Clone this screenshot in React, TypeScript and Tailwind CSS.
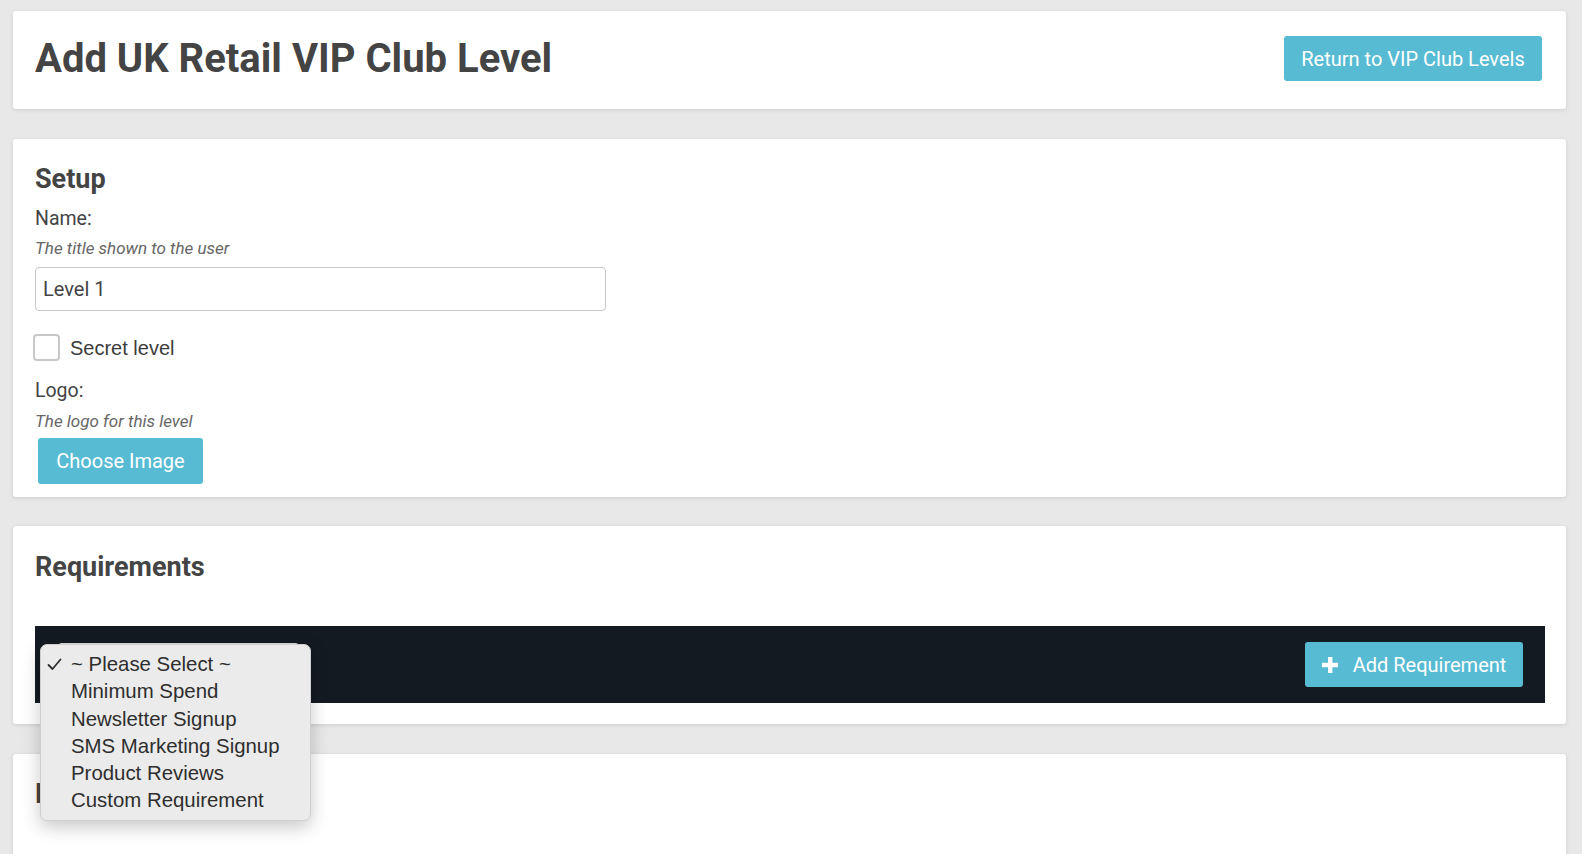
import React from "react";

const items = [
  "~ Please Select ~",
  "Minimum Spend",
  "Newsletter Signup",
  "SMS Marketing Signup",
  "Product Reviews",
  "Custom Requirement",
];

export default function App() {
  return (
    <div className="relative h-[854px] w-[1582px] overflow-hidden bg-[#e8e8e8] pl-[13px] pr-[16px] pt-[11px] font-['Roboto',sans-serif] text-[#444444]">
      {/* Header card */}
      <div className="flex items-center justify-between rounded-[3px] bg-white pl-[22px] pr-[24px] pt-[25px] pb-[28px] shadow-[0_1px_4px_rgba(0,0,0,0.12)]">
        <h1 className="text-[40px] font-bold leading-[45px] text-[#444444]">Add UK Retail VIP Club Level</h1>
        <button className="flex h-[45px] w-[258px] items-center justify-center rounded-[3px] bg-[#58bbd4] text-[20px] text-white">
          Return to VIP Club Levels
        </button>
      </div>

      {/* Setup card */}
      <div className="mt-[30px] rounded-[3px] bg-white pl-[22px] pr-[22px] pt-[26px] pb-[13px] shadow-[0_1px_4px_rgba(0,0,0,0.12)]">
        <h2 className="text-[27px] font-bold leading-[28px]">Setup</h2>
        <div className="mt-[14px] text-[19.5px] leading-[24px]">Name:</div>
        <div className="mt-[6px] text-[17px] italic leading-[22px] text-[#666666]">The title shown to the user</div>
        <div className="mt-[8px] flex h-[44px] w-[571px] items-center rounded-[4px] border border-[#c9c9c9] px-[7px] text-[20px] text-[#444444]">
          Level 1
        </div>
        <div className="mt-[23px] ml-[-2px] flex h-[27px] items-center">
          <div className="h-[27px] w-[27px] rounded-[4px] border-2 border-[#c8c8c8] bg-white" />
          <span className="ml-[10px] font-['Liberation_Sans',Arial,sans-serif] text-[20px] text-[#3c3c3c]">Secret level</span>
        </div>
        <div className="mt-[18px] text-[19.5px] leading-[24px]">Logo:</div>
        <div className="mt-[7px] text-[17px] italic leading-[22px] text-[#666666]">The logo for this level</div>
        <button className="ml-[3px] mt-[6px] flex h-[46px] w-[165px] items-center justify-center rounded-[3px] bg-[#58bbd4] text-[20px] text-white">
          Choose Image
        </button>
      </div>

      {/* Requirements card */}
      <div className="mt-[29px] rounded-[3px] bg-white pl-[22px] pr-[21px] pt-[27px] pb-[21px] shadow-[0_1px_4px_rgba(0,0,0,0.12)]">
        <h2 className="text-[27px] font-bold leading-[28px]">Requirements</h2>
        <div className="mt-[45px] flex h-[77px] items-center justify-between bg-[#131a21] pl-[22px] pr-[22px]">
          <div className="h-[44px] w-[243px] self-start mt-[17px] rounded-[5px] bg-[#dcdcdc]" />
          <button className="flex h-[45px] w-[218px] items-center justify-center gap-[15px] rounded-[3px] bg-[#58bbd4] text-[20px] text-white">
            <svg width="16" height="16" viewBox="0 0 16 16">
              <rect x="6" y="0" width="4.4" height="16" fill="white" />
              <rect x="0" y="5.8" width="16" height="4.4" fill="white" />
            </svg>
            <span>Add Requirement</span>
          </button>
        </div>
      </div>

      {/* Next card (partially visible) */}
      <div className="mt-[30px] h-[200px] rounded-[3px] bg-white pl-[22px] pt-[24px] shadow-[0_1px_4px_rgba(0,0,0,0.12)]">
        <h2 className="text-[28px] font-bold leading-[32px]">Rewards</h2>
      </div>

      {/* Native select dropdown menu */}
      <div className="absolute left-[40px] top-[644px] w-[271px] rounded-[7px] border border-[#cfcfcf] bg-[#ebebeb] py-[6px] font-['Liberation_Sans',Arial,sans-serif] text-[20.4px] text-[#2e2e2e] shadow-[0_6px_18px_rgba(0,0,0,0.22)]">
        {items.map((it, i) => (
          <div key={it} className="relative flex h-[27.2px] items-center pl-[30px]">
            {i === 0 && (
              <svg className="absolute left-[6px] top-[7px]" width="15" height="13" viewBox="0 0 15 13">
                <path d="M1.5 7 L5.5 11 L13.5 1.5" fill="none" stroke="#2e2e2e" strokeWidth="1.8" strokeLinecap="round" strokeLinejoin="round" />
              </svg>
            )}
            <span>{it}</span>
          </div>
        ))}
      </div>
    </div>
  );
}
